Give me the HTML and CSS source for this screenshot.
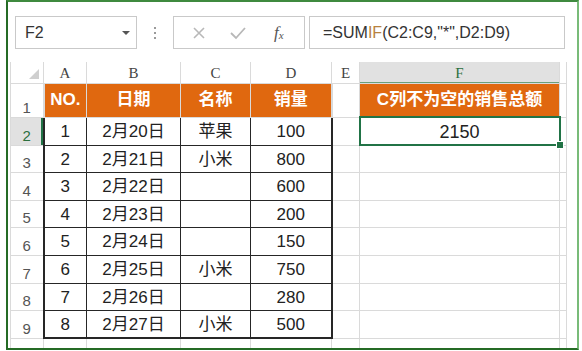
FILE: index.html
```html
<!DOCTYPE html>
<html lang="zh-CN">
<head>
    <meta charset="UTF-8">
    <title>SUMIF</title>
    <link rel="stylesheet" href="styles.css">
</head>
<body>
    <div class="frame">
        <div class="toolbar">
            <div class="namebox">
                <span>F2</span>
                <span class="caret"></span>
            </div>
            <div class="dots"><i></i><i></i><i></i></div>
            <div class="fbuttons">
                <svg width="14" height="14" viewBox="0 0 14 14"><path d="M2 2 L12 12 M12 2 L2 12" stroke="#b8b8b8" stroke-width="1.6" fill="none"/></svg>
                <svg width="18" height="14" viewBox="0 0 18 14"><path d="M2 7 L7 12 L16 2" stroke="#b8b8b8" stroke-width="1.8" fill="none"/></svg>
                <span class="fx">f<sub>x</sub></span>
            </div>
            <div class="formula">=SUM<span class="fn">IF</span>(C2:C9,"*",D2:D9)</div>
        </div>

        <table class="sheet">
            <colgroup>
                <col style="width: 33px">
                <col style="width: 43px">
                <col style="width: 94px">
                <col style="width: 70px">
                <col style="width: 81px">
                <col style="width: 28px">
                <col style="width: 200px">
                <col style="width: 7px">
            </colgroup>
            <tr class="colhead">
                <th class="corner"><span class="tri"></span></th>
                <th>A</th><th>B</th><th>C</th><th>D</th><th>E</th><th class="sel">F</th><th></th>
            </tr>
            <tr class="r1">
                <th class="rn">1</th>
                <td class="hd">NO.</td><td class="hd">日期</td><td class="hd">名称</td><td class="hd">销量</td>
                <td></td><td class="hd2">C列不为空的销售总额</td><td></td>
            </tr>
            <tr style="height: 28px">
                <th class="rn sel">2</th>
                <td class="b">1</td><td class="b">2月20日</td><td class="b">苹果</td><td class="b">100</td>
                <td></td><td class="active">2150<span class="handle"></span></td><td></td>
            </tr>
            <tr style="height: 27px">
                <th class="rn">3</th>
                <td class="b">2</td><td class="b">2月21日</td><td class="b">小米</td><td class="b">800</td>
                <td></td><td></td><td></td>
            </tr>
            <tr style="height: 28px">
                <th class="rn">4</th>
                <td class="b">3</td><td class="b">2月22日</td><td class="b"></td><td class="b">600</td>
                <td></td><td></td><td></td>
            </tr>
            <tr style="height: 27px">
                <th class="rn">5</th>
                <td class="b">4</td><td class="b">2月23日</td><td class="b"></td><td class="b">200</td>
                <td></td><td></td><td></td>
            </tr>
            <tr style="height: 28px">
                <th class="rn">6</th>
                <td class="b">5</td><td class="b">2月24日</td><td class="b"></td><td class="b">150</td>
                <td></td><td></td><td></td>
            </tr>
            <tr style="height: 28px">
                <th class="rn">7</th>
                <td class="b">6</td><td class="b">2月25日</td><td class="b">小米</td><td class="b">750</td>
                <td></td><td></td><td></td>
            </tr>
            <tr style="height: 27px">
                <th class="rn">8</th>
                <td class="b">7</td><td class="b">2月26日</td><td class="b"></td><td class="b">280</td>
                <td></td><td></td><td></td>
            </tr>
            <tr class="last" style="height: 28px">
                <th class="rn">9</th>
                <td class="b">8</td><td class="b">2月27日</td><td class="b">小米</td><td class="b">500</td>
                <td></td><td></td><td></td>
            </tr>
            <tr style="height: 27px">
                <th class="rn">10</th>
                <td></td><td></td><td></td><td></td><td></td><td></td><td></td>
            </tr>
        </table>
    </div>
</body>
</html>
```

FILE: styles.css
```css
body {
    margin: 0;
    background: #ffffff;
    font-family: "Liberation Sans", "Noto Sans CJK SC", sans-serif;
}
.frame {
    margin-left: 6px;
    width: 573px;
    height: 350px;
    box-sizing: border-box;
    border: 2px solid #256b25;
    border-right-color: #78bb78;
    border-top-color: #3f8a3f;
    background: #ffffff;
    overflow: hidden;
}
.toolbar {
    display: flex;
    align-items: center;
    height: 33px;
    padding: 14px 0 0 7px;
}
.namebox {
    display: flex;
    align-items: center;
    justify-content: space-between;
    width: 122px;
    height: 33px;
    box-sizing: border-box;
    border: 1px solid #c9c9c9;
    padding: 0 6px 0 9px;
    font-size: 16px;
    color: #333;
}
.caret {
    width: 0;
    height: 0;
    border-left: 4px solid transparent;
    border-right: 4px solid transparent;
    border-top: 4px solid #555;
}
.dots {
    display: flex;
    flex-direction: column;
    gap: 3px;
    margin: 0 17px 0 17px;
}
.dots i {
    display: block;
    width: 2px;
    height: 2px;
    background: #9a9a9a;
}
.fbuttons {
    display: flex;
    align-items: center;
    width: 132px;
    height: 33px;
    box-sizing: border-box;
    border: 1px solid #c9c9c9;
    padding-left: 18px;
    gap: 23px;
}
.fx {
    font-family: "Liberation Serif", serif;
    font-style: italic;
    font-size: 17px;
    color: #555;
    margin-left: 4px;
}
.fx sub {
    font-size: 11px;
    vertical-align: -1px;
}
.formula {
    width: 256px;
    height: 33px;
    box-sizing: border-box;
    margin-left: 4px;
    border: 1px solid #c9c9c9;
    padding-left: 13px;
    line-height: 31px;
    font-size: 16px;
    color: #333;
}
.formula .fn {
    color: #b8823e;
}
.sheet {
    margin: 13px 0 0 2px;
    table-layout: fixed;
    width: 556px;
    border-collapse: collapse;
}
.sheet td,
.sheet th {
    border: 1px solid #dadada;
    padding: 0;
    line-height: 18px;
    text-align: center;
    white-space: nowrap;
}
.colhead {
    height: 21px;
}
.colhead th {
    font-family: "Liberation Serif", serif;
    font-weight: normal;
    font-size: 15px;
    color: #444;
    border-top: none;
    vertical-align: bottom;
    padding-bottom: 1px;
}
.colhead th.sel {
    background: #e1e1e1;
    color: #2a6f3e;
    box-shadow: inset 0 -1px #6a9f7a;
}
.corner {
    position: relative;
    border-left: none;
}
.tri {
    position: absolute;
    right: 4px;
    bottom: 4px;
    width: 0;
    height: 0;
    border-left: 10px solid transparent;
    border-bottom: 10px solid #cfcfcf;
}
.rn {
    font-weight: normal;
    font-size: 15px;
    color: #555;
    vertical-align: bottom;
    padding-bottom: 2px;
    border-left: none;
}
.rn.sel {
    background: #e1e1e1;
    color: #2a6f3e;
    box-shadow: inset -2px 0 #217346;
}
.r1 {
    height: 34px;
}
.hd,
.hd2 {
    background: #e0680f;
    color: #ffffff;
    font-weight: bold;
    font-size: 17px;
}
.hd {
    border: 1px solid #3a2a20;
    border-top-width: 2px;
}
.sheet td.b {
    border: 1px solid #262626;
    font-size: 17px;
    color: #222;
    padding-top: 2px;
}
.sheet tr td.b:first-of-type,
.sheet tr .hd:first-of-type {
    border-left-width: 2px;
}
.sheet td.b:nth-child(5),
.sheet td.hd:nth-child(5) {
    border-right-width: 2px;
}
.last td.b {
    border-bottom-width: 2px;
}
.sheet td.active {
    position: relative;
    border: 2px solid #217346;
    font-size: 18px;
    color: #222;
    padding-top: 2px;
}
.handle {
    position: absolute;
    right: -5px;
    bottom: -5px;
    width: 6px;
    height: 6px;
    background: #217346;
    border: 1px solid #ffffff;
}
```
